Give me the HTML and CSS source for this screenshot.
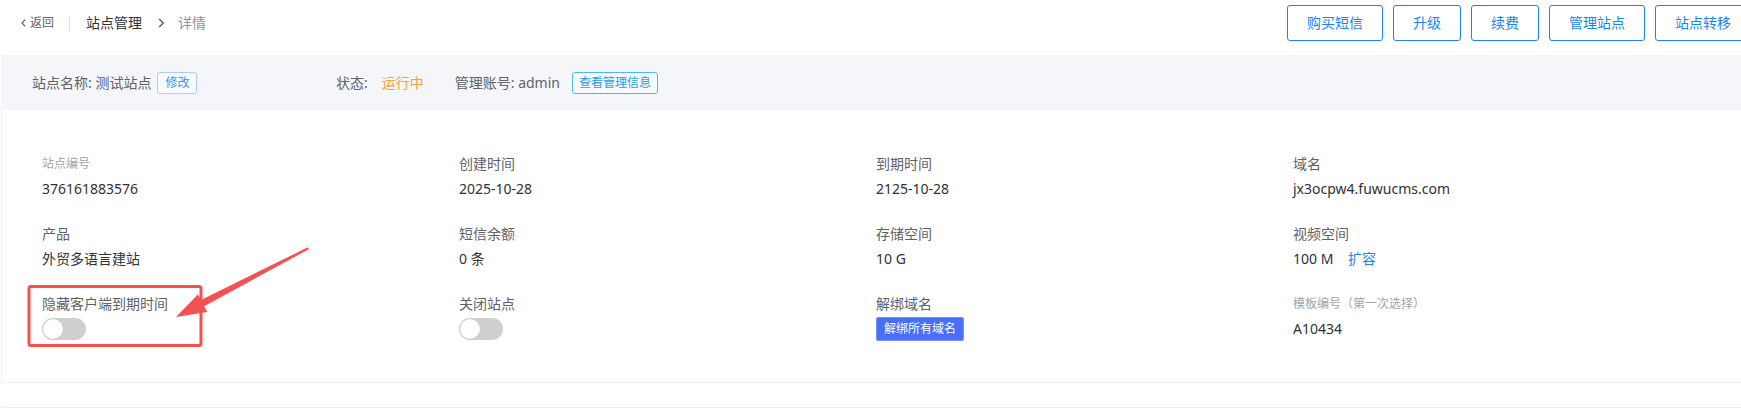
FILE: index.html
```html
<!DOCTYPE html>
<html lang="zh-CN">
<head>
<meta charset="utf-8">
<title>站点详情</title>
<link rel="stylesheet" href="styles.css">
</head>
<body>
<div class="page">
  <header class="header">
    <nav class="crumbs">
      <a class="back">
        <svg class="back-icon" width="5" height="8" viewBox="0 0 5 8"><path d="M4.2 0.6 L1 4 L4.2 7.4" fill="none" stroke="#606266" stroke-width="1.2"/></svg>
        <span>返回</span>
      </a>
      <span class="crumb-sep"></span>
      <span class="crumb-main">站点管理</span>
      <svg class="crumb-arrow" width="7" height="10" viewBox="0 0 7 10"><path d="M1.2 1 L5.2 5 L1.2 9" fill="none" stroke="#606266" stroke-width="1.5"/></svg>
      <span class="crumb-cur">详情</span>
    </nav>
    <div class="actions">
      <button class="btn-outline">购买短信</button>
      <button class="btn-outline">升级</button>
      <button class="btn-outline">续费</button>
      <button class="btn-outline">管理站点</button>
      <button class="btn-outline">站点转移</button>
    </div>
  </header>

  <section class="infobar">
    <div class="info-name">
      <span>站点名称: 测试站点</span>
      <button class="btn-mini">修改</button>
    </div>
    <span class="info-label">状态:</span>
    <span class="status-run">运行中</span>
    <span class="info-account">管理账号: admin</span>
    <button class="btn-mini btn-cyan">查看管理信息</button>
  </section>

  <section class="card">
    <div class="grid">
      <div class="cell">
        <div class="label label-muted">站点编号</div>
        <div class="value">376161883576</div>
      </div>
      <div class="cell">
        <div class="label">创建时间</div>
        <div class="value">2025-10-28</div>
      </div>
      <div class="cell">
        <div class="label">到期时间</div>
        <div class="value">2125-10-28</div>
      </div>
      <div class="cell">
        <div class="label">域名</div>
        <div class="value">jx3ocpw4.fuwucms.com</div>
      </div>

      <div class="cell">
        <div class="label">产品</div>
        <div class="value">外贸多语言建站</div>
      </div>
      <div class="cell">
        <div class="label">短信余额</div>
        <div class="value">0 条</div>
      </div>
      <div class="cell">
        <div class="label">存储空间</div>
        <div class="value">10 G</div>
      </div>
      <div class="cell">
        <div class="label">视频空间</div>
        <div class="value">100 M <a class="link">扩容</a></div>
      </div>

      <div class="cell">
        <div class="label">隐藏客户端到期时间</div>
        <div class="value"><span class="switch"><span class="knob"></span></span></div>
      </div>
      <div class="cell">
        <div class="label">关闭站点</div>
        <div class="value"><span class="switch"><span class="knob"></span></span></div>
      </div>
      <div class="cell">
        <div class="label">解绑域名</div>
        <div class="value"><button class="btn-solid">解绑所有域名</button></div>
      </div>
      <div class="cell">
        <div class="label label-muted">模板编号（第一次选择）</div>
        <div class="value">A10434</div>
      </div>
    </div>
  </section>

  <section class="card-next"></section>

  <svg class="annotation" width="340" height="360" viewBox="0 0 340 360">
    <rect x="29" y="286.5" width="172" height="59" rx="2" fill="none" stroke="#f45252" stroke-width="3"/>
    <polygon points="176,317 198,294.2 201,300 307.8,247.3 308.8,249.2 204.2,306.2 207.2,312" fill="#f45252"/>
  </svg>
</div>
</body>
</html>
```

FILE: styles.css
```css
html, body {
  margin: 0;
  padding: 0;
  background: #ffffff;
  overflow: hidden;
}

body {
  width: 1741px;
  height: 409px;
  font-family: "Noto Sans", "Noto Sans CJK SC", sans-serif;
  color: #303133;
}

.page {
  position: relative;
  margin-left: 1px;
  width: 1760px;
}

/* header */
.header {
  display: flex;
  justify-content: space-between;
  align-items: center;
  height: 36px;
  padding: 5px 10px 14px 20px;
}

.crumbs {
  display: flex;
  align-items: center;
  height: 20px;
}

.back {
  display: flex;
  align-items: center;
  font-size: 12px;
  line-height: 20px;
  color: #606266;
  cursor: pointer;
}

.back-icon {
  margin-right: 4px;
}

.crumb-sep {
  width: 1px;
  height: 15px;
  background: #dcdfe6;
  margin: 0 16px 0 15px;
}

.crumb-main {
  font-size: 14px;
  line-height: 20px;
  color: #303133;
}

.crumb-arrow {
  margin: 0 13px 0 16px;
}

.crumb-cur {
  font-size: 14px;
  line-height: 20px;
  color: #909399;
}

.actions {
  display: flex;
  gap: 10px;
}

.btn-outline {
  height: 36px;
  padding: 0 19px;
  border: 1px solid #1a84f5;
  border-radius: 3px;
  background: #ffffff;
  color: #1a84f5;
  font-family: inherit;
  font-size: 14px;
  line-height: 34px;
  white-space: nowrap;
}

/* info bar */
.infobar {
  display: flex;
  align-items: center;
  height: 55px;
  padding-left: 31px;
  background: #f5f6fa;
  font-size: 14px;
  line-height: 20px;
  color: #606266;
}

.info-name {
  display: flex;
  align-items: center;
  width: 304px;
}

.btn-mini {
  height: 22px;
  margin-left: 6px;
  padding: 0 7px;
  border: 1px solid #a6d0fb;
  border-radius: 3px;
  background: #f7fbff;
  color: #3a95f0;
  font-family: inherit;
  font-size: 12px;
  line-height: 20px;
  white-space: nowrap;
}

.btn-cyan {
  margin-left: 12px;
  padding: 0 6px;
  border-color: #50b6ef;
  color: #1f9de6;
}

.status-run {
  margin-left: 14px;
  color: #f5a43a;
}

.info-account {
  margin-left: 31px;
}

/* detail card */
.card {
  border-left: 1px solid #ebeef5;
  border-bottom: 1px solid #ebeef5;
  padding: 44px 0 42px 40px;
}

.grid {
  display: grid;
  grid-template-columns: repeat(4, 417px);
  grid-auto-rows: 46px;
  row-gap: 24px;
}

.cell {
  display: flex;
  flex-direction: column;
}

.label {
  font-size: 14px;
  line-height: 20px;
  color: #606266;
  white-space: nowrap;
}

.label-muted {
  font-size: 12px;
  color: #a0a3a8;
}

.value {
  display: flex;
  align-items: center;
  margin-top: 4px;
  height: 22px;
  font-size: 14px;
  line-height: 22px;
  color: #303133;
  white-space: pre;
}

.link {
  margin-left: 11px;
  color: #1a84f5;
  cursor: pointer;
}

.switch {
  position: relative;
  display: inline-block;
  width: 44px;
  height: 22px;
  border-radius: 11px;
  background: #cfcfcf;
}

.knob {
  position: absolute;
  top: 1px;
  left: 1px;
  width: 20px;
  height: 20px;
  border-radius: 50%;
  background: #ffffff;
  box-shadow: 0 0 0 0.5px #c4c4c4;
}

.btn-solid {
  height: 24px;
  padding: 0 7px;
  border: 1px solid #7390ff;
  border-radius: 2px;
  background: #4a6ef6;
  color: #ffffff;
  font-family: inherit;
  font-size: 12px;
  line-height: 22px;
  white-space: nowrap;
}

.card-next {
  margin-top: 24px;
  border-top: 1px solid #ebeef5;
  height: 40px;
}

/* screenshot annotation overlay */
.annotation {
  position: absolute;
  top: 0;
  left: -1px;
  pointer-events: none;
}
```
